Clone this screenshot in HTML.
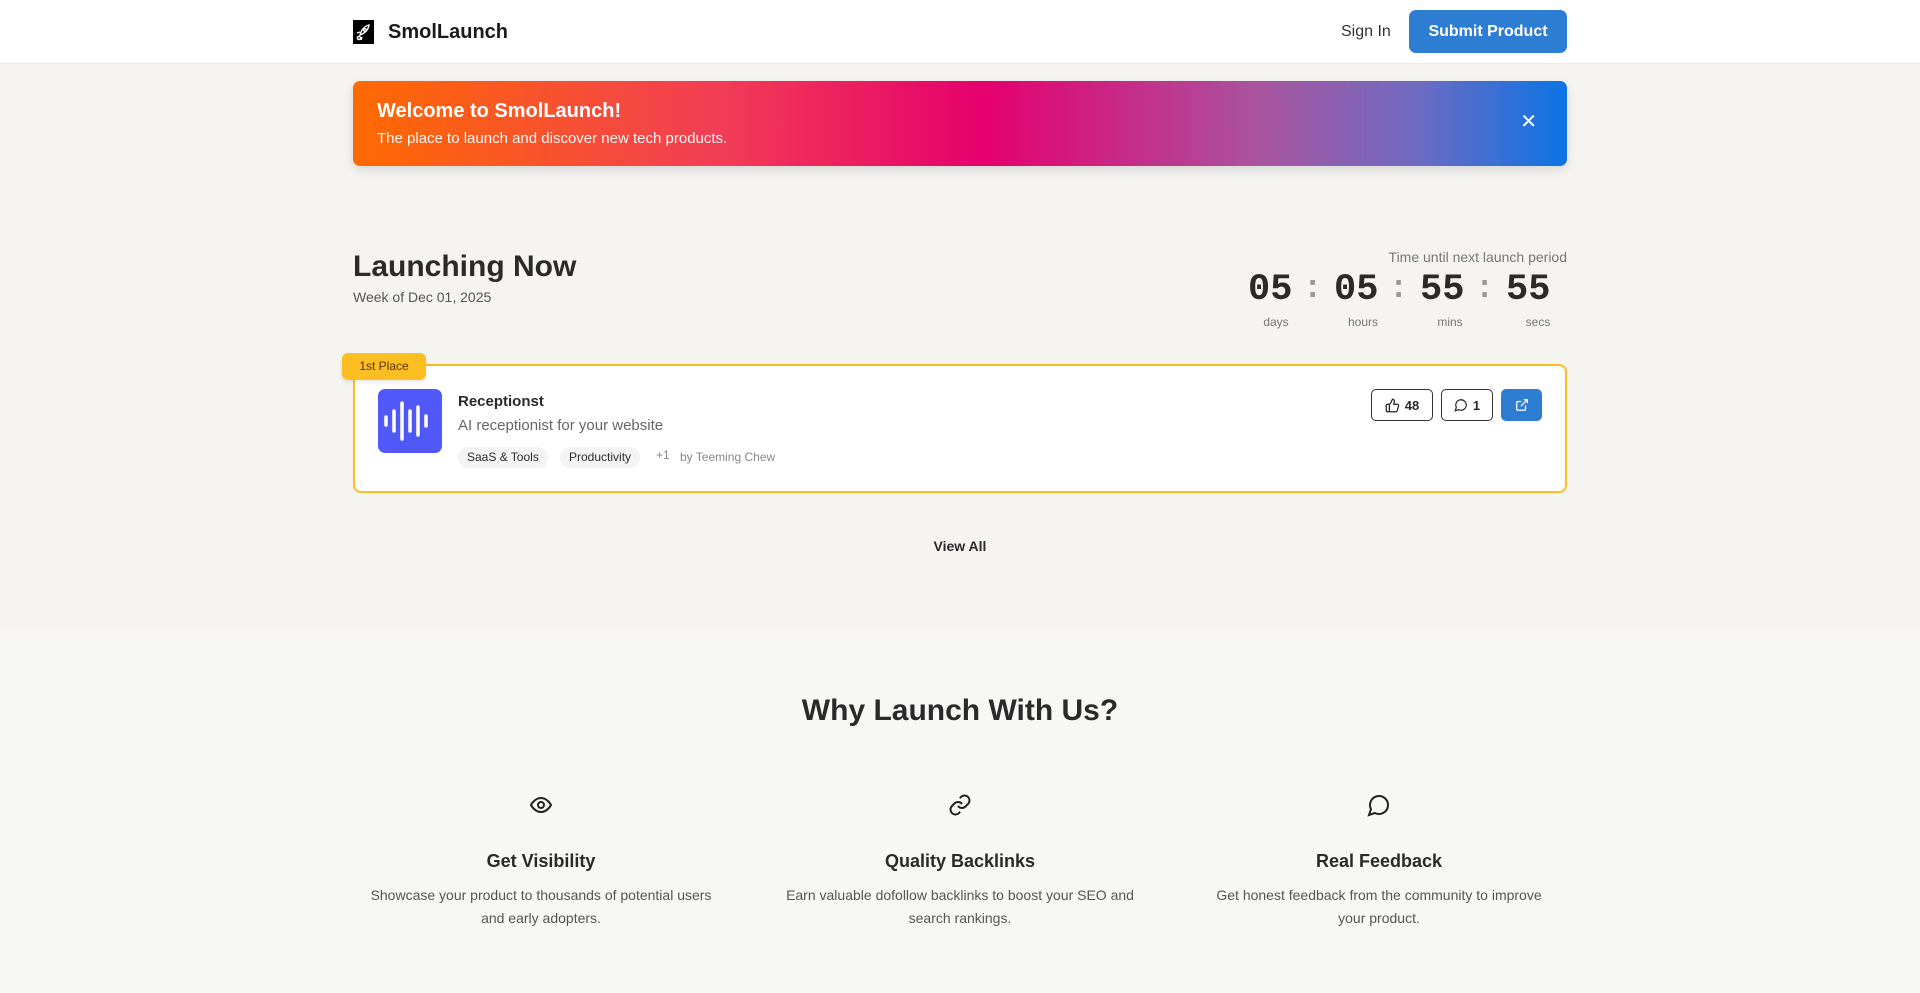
<!DOCTYPE html>
<html><head><meta charset="utf-8"><style>
*{box-sizing:border-box;margin:0;padding:0}
body{width:1920px;height:993px;overflow:hidden;font-family:"Liberation Sans",sans-serif;background:#f5f4f1;color:#2a2a2a}
.hdr{height:64px;background:#fff;border-bottom:1px solid #ebebeb;position:relative}
.logo{position:absolute;left:353px;top:20px;width:21px;height:24px;background:#000}
.brand{position:absolute;left:388px;top:21px;font-size:20px;font-weight:bold;color:#1a1a1a}
.signin{position:absolute;left:1341px;top:23px;font-size:16px;color:#333}
.submit{position:absolute;left:1409px;top:10px;width:158px;height:43px;background:#2d7dd2;border-radius:7px;color:#fff;font-weight:bold;font-size:16px;text-align:center;line-height:43px}
.banner{position:absolute;left:353px;top:81px;width:1214px;height:85px;border-radius:7px;background:linear-gradient(90deg,#ff6a00 0%,#f23d55 30%,#e6006e 52%,#a855a0 75%,#6b6bc2 88%,#0b74e5 100%);box-shadow:0 4px 10px rgba(0,0,0,.12);color:#fff}
.banner h2{position:absolute;left:24px;top:19px;font-size:20px}
.banner p{position:absolute;left:24px;top:49px;font-size:15px;opacity:.95}
.banner .x{position:absolute;right:30px;top:28px;font-size:20px}
.ln{position:absolute;left:353px;top:250px;font-size:30px;font-weight:bold}
.wk{position:absolute;left:353px;top:289px;font-size:14px;color:#555}
.tu{position:absolute;right:353px;top:249px;font-size:14px;color:#777}
.dg{position:absolute;top:269px;font-family:"Liberation Mono",monospace;font-weight:bold;font-size:37px;color:#2a2a2a}
.col{position:absolute;top:270px;font-family:"Liberation Mono",monospace;font-weight:bold;font-size:32px;color:#999}
.lb{position:absolute;top:315px;font-size:12px;color:#777;width:60px;text-align:center}
.card{position:absolute;left:353px;top:364px;width:1214px;height:129px;border:2px solid #fbbf24;border-radius:8px;background:#fff}
.badge{position:absolute;left:342px;top:353px;width:84px;height:27px;background:#fbbf24;border-radius:6px;font-size:12px;color:#5a3300;text-align:center;line-height:27px;box-shadow:0 2px 4px rgba(0,0,0,.1)}
.ic{position:absolute;left:378px;top:389px;width:64px;height:64px;border-radius:7px;background:#5059f7}
.t1{position:absolute;left:458px;top:393px;font-size:15px;font-weight:bold}
.t2{position:absolute;left:458px;top:417px;font-size:15px;color:#666}
.tag{position:absolute;top:447px;height:21px;line-height:21px;padding:0 9px;background:#f4f4f4;border-radius:10px;font-size:12px}
.btn{position:absolute;top:389px;height:32px;border:1px solid #333;border-radius:5px;background:#fff;font-size:13px;font-weight:bold;display:flex;align-items:center;justify-content:center;gap:5px}
.va{position:absolute;left:0;width:1920px;top:538px;text-align:center;font-size:14px;font-weight:bold}
.s2{position:absolute;left:0;top:631px;width:1920px;height:362px;background:#f7f7f6}
.wh{position:absolute;width:1920px;top:694px;text-align:center;font-size:30px;font-weight:bold}
.f{position:absolute;width:400px;text-align:center}
.f svg{display:block;margin:0 auto}
.f h3{font-size:18px;margin-top:34px}
.f p{font-size:14px;color:#555;line-height:23px;margin-top:12px}
</style></head><body>
<div class="hdr"></div>
<div class="logo"><svg width="21" height="24" viewBox="0 0 21 24"><g fill="none" stroke="#fff" stroke-width="1.4"><path d="M7 15 Q9 7 16 5 Q15 12 7 15Z"/><circle cx="12" cy="10" r="1.3"/><circle cx="6" cy="18" r="1.6"/><path d="M4 13 L7 12 M9 17 L8 20"/></g></svg></div>
<div class="brand">SmolLaunch</div>
<div class="signin">Sign In</div>
<div class="submit">Submit Product</div>
<div class="banner"><h2>Welcome to SmolLaunch!</h2><p>The place to launch and discover new tech products.</p><div class="x">✕</div></div>
<div class="ln">Launching Now</div>
<div class="wk">Week of Dec 01, 2025</div>
<div class="tu">Time until next launch period</div>
<div class="dg" style="left:1248px">05</div><div class="col" style="left:1303px">:</div>
<div class="dg" style="left:1334px">05</div><div class="col" style="left:1389px">:</div>
<div class="dg" style="left:1420px">55</div><div class="col" style="left:1475px">:</div>
<div class="dg" style="left:1506px">55</div>
<div class="lb" style="left:1246px">days</div><div class="lb" style="left:1333px">hours</div><div class="lb" style="left:1420px">mins</div><div class="lb" style="left:1508px">secs</div>
<div class="card"></div>
<div class="badge">1st Place</div>
<div class="ic"><svg width="64" height="64"><g stroke="#fff" stroke-width="3.5" stroke-linecap="round"><path d="M8 28v8M16 22v20M24 14v36M32 22v20M40 18v28M48 27v10"/></g></svg></div>
<div class="t1">Receptionst</div>
<div class="t2">AI receptionist for your website</div>
<div class="tag" style="left:458px">SaaS &amp; Tools</div>
<div class="tag" style="left:560px">Productivity</div>
<div style="position:absolute;left:656px;top:448px;font-size:12px;color:#888">+1</div>
<div style="position:absolute;left:680px;top:450px;font-size:12px;color:#888">by Teeming Chew</div>
<div class="btn" style="left:1371px;width:62px"><svg width="15" height="15" viewBox="0 0 24 24" fill="none" stroke="#222" stroke-width="2"><path d="M7 10v12M15 5.9 14 10h5.8a2 2 0 0 1 1.9 2.6l-2.3 8A2 2 0 0 1 17.4 22H4a2 2 0 0 1-2-2v-8a2 2 0 0 1 2-2h2.8a2 2 0 0 0 1.8-1.1L12 2a3.1 3.1 0 0 1 3 3.9Z"/></svg>48</div>
<div class="btn" style="left:1441px;width:52px"><svg width="14" height="14" viewBox="0 0 24 24" fill="none" stroke="#222" stroke-width="2"><path d="M7.9 20A9 9 0 1 0 4 16.1L2 22Z"/><path d="M8 12h.01M12 12h.01M16 12h.01"/></svg>1</div>
<div class="btn" style="left:1501px;width:41px;background:#2d7dd2;border-color:#2d7dd2"><svg width="14" height="14" viewBox="0 0 24 24" fill="none" stroke="#fff" stroke-width="2.2"><path d="M15 3h6v6M10 14 21 3M18 13v6a2 2 0 0 1-2 2H5a2 2 0 0 1-2-2V8a2 2 0 0 1 2-2h6"/></svg></div>
<div class="va">View All</div>
<div class="s2"></div>
<div class="wh">Why Launch With Us?</div>
<div class="f" style="left:341px;top:793px"><svg width="24" height="24" viewBox="0 0 24 24" fill="none" stroke="#222" stroke-width="2"><path d="M2 12s3.5-7 10-7 10 7 10 7-3.5 7-10 7S2 12 2 12Z"/><circle cx="12" cy="12" r="3"/></svg><h3>Get Visibility</h3><p>Showcase your product to thousands of potential users<br>and early adopters.</p></div>
<div class="f" style="left:760px;top:793px"><svg width="24" height="24" viewBox="0 0 24 24" fill="none" stroke="#222" stroke-width="2"><path d="M10 13a5 5 0 0 0 7.5.5l3-3a5 5 0 0 0-7-7l-1.7 1.7"/><path d="M14 11a5 5 0 0 0-7.5-.5l-3 3a5 5 0 0 0 7 7l1.7-1.7"/></svg><h3>Quality Backlinks</h3><p>Earn valuable dofollow backlinks to boost your SEO and<br>search rankings.</p></div>
<div class="f" style="left:1179px;top:793px"><svg width="24" height="24" viewBox="0 0 24 24" fill="none" stroke="#222" stroke-width="2"><path d="M7.9 20A9 9 0 1 0 4 16.1L2 22Z"/><path d="M8 12h.01M12 12h.01M16 12h.01"/></svg><h3>Real Feedback</h3><p>Get honest feedback from the community to improve<br>your product.</p></div>
</body></html>
